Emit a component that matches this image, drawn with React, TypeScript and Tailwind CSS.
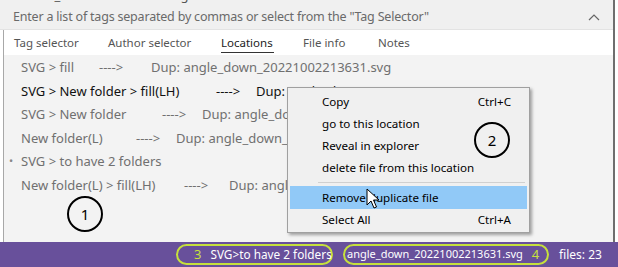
import React from "react";

const rows: { a: string; arrowX: number; dupX: number; dup: string; dark?: boolean; bullet?: boolean }[] = [
  { a: "SVG > fill", arrowX: 99, dupX: 151, dup: "Dup: angle_down_20221002213631.svg" },
  { a: "SVG > New folder > fill(LH)", arrowX: 216, dupX: 256, dup: "Dup: angle_down_20221002213631.svg", dark: true },
  { a: "SVG > New folder", arrowX: 162, dupX: 202, dup: "Dup: angle_down_20221002213631.svg" },
  { a: "New folder(L)", arrowX: 136, dupX: 176, dup: "Dup: angle_down_20221002213631.svg" },
  { a: "SVG > to have 2 folders", arrowX: -1, dupX: -1, dup: "", bullet: true },
  { a: "New folder(L) > fill(LH)", arrowX: 184, dupX: 229, dup: "Dup: angle_down_20221002213631.svg" },
];

function Circle({ n }: { n: string }) {
  return (
    <div className="w-[36px] h-[36px] rounded-full border-2 border-black flex items-center justify-center text-[15px] text-black bg-transparent">
      {n}
    </div>
  );
}

export default function App() {
  const font = { fontFamily: '"Noto Sans", "Open Sans", sans-serif' };
  return (
    <div className="w-[618px] h-[267px] bg-white overflow-hidden relative" style={font}>
      <div className="flex flex-col w-[615px] h-[242px] border-r-2 border-[#6e6e6e]">
        {/* cut-off top row */}
        <div className="h-[6px] overflow-hidden bg-[#f0f0f0] relative">
          <div className="absolute left-[20px] top-[-14px] text-[13px] text-[#555] whitespace-nowrap">filltoe_20221002213631.svg</div>
          <div className="absolute left-[347px] top-[-14px] text-[13px] text-[#555]">1</div>
          <div className="absolute left-[410px] top-[-14px] text-[13px] text-[#555] whitespace-nowrap">102 0001 07 07 2021 2022-10-10</div>
        </div>
        {/* tag input */}
        <div className="h-[24px] bg-[#f0f0f0] flex items-center justify-between pl-[13px] pr-[12px] border-b border-[#e3e3e3]">
          <span className="text-[12.5px] text-[#6a6a6a] tracking-[-0.2px] whitespace-nowrap">Enter a list of tags separated by commas or select from the "Tag Selector"</span>
          <svg width="14" height="10" viewBox="0 0 14 10"><path d="M2 7 L7 2 L12 7" fill="none" stroke="#666" strokeWidth="1.2" /></svg>
        </div>
        <div className="flex-1 flex flex-col border-l border-[#a8a8a8] ml-[3px]">
          {/* tabs */}
          <div className="h-[25px] bg-white relative text-[11.5px] text-[#555] whitespace-nowrap">
            <span className="absolute left-[10px] top-[4px]">Tag selector</span>
            <span className="absolute left-[104px] top-[4px]">Author selector</span>
            <span className="absolute left-[217px] top-[4px] text-[#222]">Locations</span>
            <div className="absolute left-[217px] top-[22px] w-[53px] h-[1px] bg-[#333]" />
            <span className="absolute left-[299px] top-[4px]">File info</span>
            <span className="absolute left-[374px] top-[4px]">Notes</span>
          </div>
          {/* list */}
          <div className="flex-1 bg-[#f3f3f3] pt-[1px]">
            {rows.map((r, i) => (
              <div key={i} className={`relative h-[23.5px] text-[13px] whitespace-nowrap ${r.dark ? "text-[#111]" : "text-[#707070]"}`}>
                {r.bullet && <span className="absolute left-[5px] top-[3px] text-[#888] text-[11px]">•</span>}
                <span className="absolute left-[17px] top-[2px]">{r.a}</span>
                {r.arrowX > 0 && <span className="absolute top-[2px]" style={{ left: r.arrowX - 4 }}>----&gt;</span>}
                {r.dupX > 0 && <span className="absolute top-[2px]" style={{ left: r.dupX - 4 }}>{r.dup}</span>}
              </div>
            ))}
          </div>
        </div>
      </div>

      {/* status bar */}
      <div className="h-[25px] bg-[#68509b] flex items-center text-[12px] text-white whitespace-nowrap">
        <div className="ml-[176px] w-[157px] h-[21px] rounded-full border-2 border-[#c6e03c] flex items-center pl-[16px]">
          <span className="text-[#c6e03c] mr-[9px] text-[13px]">3</span>
          <span className="text-[11.8px]">SVG&gt;to have 2 folders</span>
        </div>
        <div className="ml-[10px] w-[206px] h-[21px] rounded-full border-2 border-[#c6e03c] flex items-center pl-[2px]">
          <span className="text-[11px]">angle_down_20221002213631.svg</span>
          <span className="text-[#c6e03c] ml-[9px] text-[13px]">4</span>
        </div>
        <span className="ml-[10px] text-[12px]">files: 23</span>
      </div>

      {/* circle 1 */}
      <div className="absolute left-[67px] top-[196px]"><Circle n="1" /></div>

      {/* context menu */}
      <div className="absolute left-[287px] top-[87px] w-[243px] h-[146px] bg-[#f0f0f0] border border-[#a0a0a0] shadow-[2px_2px_3px_rgba(0,0,0,0.35)] text-[11.6px] text-black px-[2px] pt-[3px] whitespace-nowrap">
        <div className="h-[22px] flex items-center justify-between pl-[32px] pr-[16px]"><span>Copy</span><span>Ctrl+C</span></div>
        <div className="h-[22px] flex items-center pl-[32px]">go to this location</div>
        <div className="h-[22px] flex items-center pl-[32px]">Reveal in explorer</div>
        <div className="h-[22px] flex items-center pl-[32px]">delete file from this location</div>
        <div className="h-[7px] flex items-center pl-[28px] pr-[2px]"><div className="h-[1px] w-full bg-[#d0d0d0]" /></div>
        <div className="h-[23px] flex items-center pl-[32px] bg-[#91c9f7]">Remove duplicate file</div>
        <div className="h-[22px] flex items-center justify-between pl-[32px] pr-[16px]"><span>Select All</span><span>Ctrl+A</span></div>
        <div className="absolute left-[186px] top-[34px]"><Circle n="2" /></div>
      </div>

      {/* cursor */}
      <svg className="absolute left-[366px] top-[188px]" width="14" height="22" viewBox="0 0 14 22">
        <path d="M1 1 L1 17 L5 13 L8 20 L10.5 19 L7.5 12 L13 12 Z" fill="white" stroke="black" strokeWidth="1" strokeLinejoin="round" />
      </svg>
    </div>
  );
}
